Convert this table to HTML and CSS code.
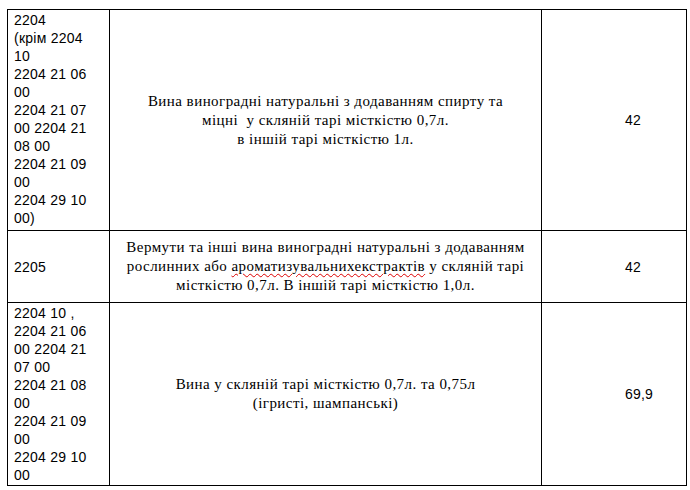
FILE: index.html
```html
<!DOCTYPE html>
<html lang="uk">
<head>
<meta charset="utf-8">
<link rel="stylesheet" href="styles.css">
</head>
<body>
<table class="tariff">
  <colgroup>
    <col class="c-code">
    <col class="c-desc">
    <col class="c-rate">
  </colgroup>
  <tr class="r1">
    <td class="code top">2204<br>(крім 2204 10<br>2204 21 06 00<br>2204 21 07 00 2204 21 08 00<br>2204 21 09 00<br>2204 29 10 00)</td>
    <td class="desc">Вина виноградні натуральні з додаванням спирту та<br>міцні&nbsp; у скляній тарі місткістю 0,7л.<br>в іншій тарі місткістю 1л.</td>
    <td class="rate">42</td>
  </tr>
  <tr class="r2">
    <td class="code">2205</td>
    <td class="desc">Вермути та інші вина виноградні натуральні з додаванням<br>рослинних або <span class="spell">ароматизувальнихекстрактів</span> у скляній тарі<br>місткістю 0,7л. В іншій тарі місткістю 1,0л.</td>
    <td class="rate">42</td>
  </tr>
  <tr class="r3">
    <td class="code top">2204 10 ,<br>2204 21 06 00 2204 21 07 00<br>2204 21 08 00<br>2204 21 09 00<br>2204 29 10 00</td>
    <td class="desc">Вина у скляній тарі місткістю 0,7л. та 0,75л<br>(ігристі, шампанські)</td>
    <td class="rate">69,9</td>
  </tr>
</table>
</body>
</html>
```
FILE: styles.css
```css
html, body {
  margin: 0;
  padding: 0;
  background: #fff;
}
body {
  padding: 9px 0 0 7px;
}
.tariff {
  border-collapse: collapse;
  table-layout: fixed;
  width: 679px;
  color: #000;
}
.c-code { width: 102px; }
.c-desc { width: 432px; }
.c-rate { width: 145px; }
.tariff td {
  border: 1px solid #000;
  padding: 0;
  vertical-align: middle;
  overflow: hidden;
}
.r1 { height: 221px; }
.r2 { height: 72px; }
.r3 { height: 183px; }
.code {
  font-family: "Liberation Sans", Arial, sans-serif;
  font-size: 14px;
  letter-spacing: 0.25px;
  line-height: 18px;
  padding: 0 14px 0 6px !important;
}
.code.top {
  vertical-align: top !important;
  padding-top: 1px !important;
}
.desc {
  font-family: "Liberation Serif", "Times New Roman", serif;
  font-size: 15px;
  letter-spacing: 0.45px;
  line-height: 19px;
  text-align: center;
}
.rate {
  font-family: "Liberation Sans", Arial, sans-serif;
  font-size: 14px;
  letter-spacing: 0.2px;
  padding-left: 83px !important;
}
.spell {
  text-decoration: underline wavy #d00;
  text-decoration-thickness: 1px;
  text-underline-offset: 2px;
}
```
